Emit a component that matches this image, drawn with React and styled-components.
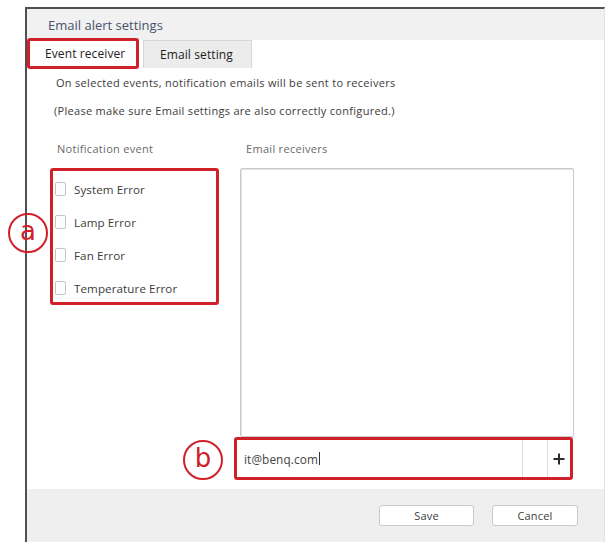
import React from "react";
import styled, { createGlobalStyle } from "styled-components";

const Global = createGlobalStyle`
  html, body { margin: 0; padding: 0; background: #ffffff; }
  body { font-family: "Open Sans", "Noto Sans", sans-serif; color: #3a3a3a; }
  #root { width: 607px; height: 542px; overflow: hidden; }
`;

const MARK_RED = "#d0212b";

const Page = styled.div`
  position: relative;
  width: 607px;
  height: 542px;
  padding: 7px 2px 0 25px;
  box-sizing: border-box;
`;

const Dialog = styled.div`
  display: flex;
  flex-direction: column;
  height: 535px;
  border-left: 2px solid #4c5157;
  border-top: 2px solid #4c5157;
  border-right: 1px solid #e2e2e2;
  box-sizing: border-box;
  background: #ffffff;
`;

const TitleBar = styled.div`
  height: 31px;
  flex: none;
  background: #f1f1f1;
  display: flex;
  align-items: center;
  padding-left: 21px;
  font-size: 13px;
  color: #48536b;
  letter-spacing: 0;
`;

const TabRow = styled.div`
  display: flex;
  align-items: flex-start;
  height: 29px;
  flex: none;
  margin-top: -2px;
  gap: 4px;
`;

const Tab = styled.div`
  box-sizing: border-box;
  display: flex;
  align-items: center;
  font-size: 12px;
  color: #1d1d1d;
  letter-spacing: 0.1px;
  ${(p) =>
    p.$active
      ? `
    width: 112px;
    height: 31px;
    padding-left: 15px;
    background: #fff;
    border: 3px solid ${MARK_RED};
    border-radius: 3px;
  `
      : `
    width: 109px;
    height: 28px;
    margin-top: 2px;
    padding-left: 16px;
    background: #ececec;
    border: 1px solid #d6d6d6;
    border-bottom: none;
  `}
`;

const Content = styled.div`
  flex: 1;
  display: flex;
  flex-direction: column;
  padding-top: 8px;
`;

const Info = styled.div`
  font-size: 11px;
  line-height: 16px;
  color: #3c3c3c;
  padding-left: ${(p) => p.$indent}px;
  margin-top: ${(p) => p.$gap || 0}px;
  letter-spacing: 0.3px;
  white-space: nowrap;
`;

const Columns = styled.div`
  display: grid;
  grid-template-columns: 169px 339px;
  column-gap: 15px;
  padding-left: 23px;
  margin-top: 22px;
`;

const Heading = styled.div`
  font-size: 11px;
  line-height: 16px;
  color: #6a6a6a;
  padding-left: ${(p) => p.$indent}px;
  margin-bottom: 11px;
  letter-spacing: 0.3px;
`;

const EventBox = styled.div`
  box-sizing: border-box;
  height: 137px;
  border: 3px solid ${MARK_RED};
  border-radius: 3px;
  display: flex;
  flex-direction: column;
  gap: 17px;
  padding: 10px 0 0 2px;
`;

const CheckRow = styled.label`
  display: flex;
  align-items: center;
  gap: 8px;
  height: 16px;
  font-size: 11.6px;
  color: #3c3c3c;
  letter-spacing: 0.1px;
`;

const Check = styled.span`
  width: 11px;
  height: 14px;
  flex: none;
  box-sizing: border-box;
  border: 1px solid #c4c4c4;
  border-radius: 2px;
  background: #fff;
`;

const ReceiverCol = styled.div`
  display: flex;
  flex-direction: column;
`;

const ReceiverList = styled.div`
  height: 269px;
  margin-left: 6px;
  margin-right: -1px;
  box-sizing: border-box;
  border: 1px solid #c9c9c9;
  border-radius: 2px;
  box-shadow: inset 1px 1px 0 #e4e4e4;
  background: #fff;
`;

const AddRow = styled.div`
  box-sizing: border-box;
  height: 43px;
  border: 3px solid ${MARK_RED};
  border-radius: 3px;
  display: flex;
  align-items: stretch;
  background: #fff;
`;

const AddressField = styled.div`
  flex: 1;
  display: flex;
  align-items: center;
  padding-left: 7px;
  font-size: 11.8px;
  color: #444;
  border-right: 1px solid #dcdcdc;
  letter-spacing: 0.1px;
`;

const Caret = styled.span`
  display: inline-block;
  width: 1px;
  height: 13px;
  background: #333;
  margin-left: 1px;
`;

const Spacer = styled.div`
  width: 24px;
  border-right: 1px solid #dcdcdc;
`;

const AddButton = styled.div`
  width: 22px;
  display: flex;
  align-items: center;
  justify-content: center;
`;

const Footer = styled.div`
  height: 52px;
  flex: none;
  background: #efefef;
  display: flex;
  align-items: center;
  justify-content: flex-end;
  gap: 18px;
  padding-right: 26px;
  padding-bottom: 1px;
`;

const Button = styled.div`
  width: ${(p) => p.$w}px;
  height: 21px;
  box-sizing: border-box;
  background: #fff;
  border: 1px solid #cacaca;
  border-radius: 3px;
  display: flex;
  align-items: center;
  justify-content: center;
  font-size: 11px;
  color: #3c3c3c;
  letter-spacing: 0.2px;
`;

/* Red circled callout letters drawn over the dialog */
const Callout = styled.div`
  position: absolute;
  left: ${(p) => p.$x}px;
  top: ${(p) => p.$y}px;
  width: 40px;
  height: 40px;
  box-sizing: border-box;
  border: 2.5px solid ${MARK_RED};
  border-radius: 50%;
  display: flex;
  align-items: center;
  justify-content: center;
  color: ${MARK_RED};
  font-family: "DejaVu Sans", sans-serif;
  font-size: 26px;
  line-height: 1;
  padding-bottom: 4px;
`;

const events = ["System Error", "Lamp Error", "Fan Error", "Temperature Error"];

export default function App() {
  return (
    <>
      <Global />
      <Page>
        <Dialog>
          <TitleBar>Email alert settings</TitleBar>
          <TabRow>
            <Tab $active>Event receiver</Tab>
            <Tab>Email setting</Tab>
          </TabRow>
          <Content>
            <Info $indent={29}>
              On selected events, notification emails will be sent to receivers
            </Info>
            <Info $indent={27} $gap={12}>
              (Please make sure Email settings are also correctly configured.)
            </Info>
            <Columns>
              <div>
                <Heading $indent={7}>Notification event</Heading>
                <EventBox>
                  {events.map((e) => (
                    <CheckRow key={e}>
                      <Check />
                      {e}
                    </CheckRow>
                  ))}
                </EventBox>
              </div>
              <ReceiverCol>
                <Heading $indent={12}>Email receivers</Heading>
                <ReceiverList />
                <AddRow>
                  <AddressField>
                    it@benq.com
                    <Caret />
                  </AddressField>
                  <Spacer />
                  <AddButton>
                    <svg width="12" height="12" viewBox="0 0 12 12">
                      <path d="M6 0.5v11M0.5 6h11" stroke="#2b2b2b" strokeWidth="2" />
                    </svg>
                  </AddButton>
                </AddRow>
              </ReceiverCol>
            </Columns>
          </Content>
          <Footer>
            <Button $w={95}>Save</Button>
            <Button $w={86}>Cancel</Button>
          </Footer>
        </Dialog>
        <Callout $x={8} $y={213}>a</Callout>
        <Callout $x={183} $y={440}>b</Callout>
      </Page>
    </>
  );
}
